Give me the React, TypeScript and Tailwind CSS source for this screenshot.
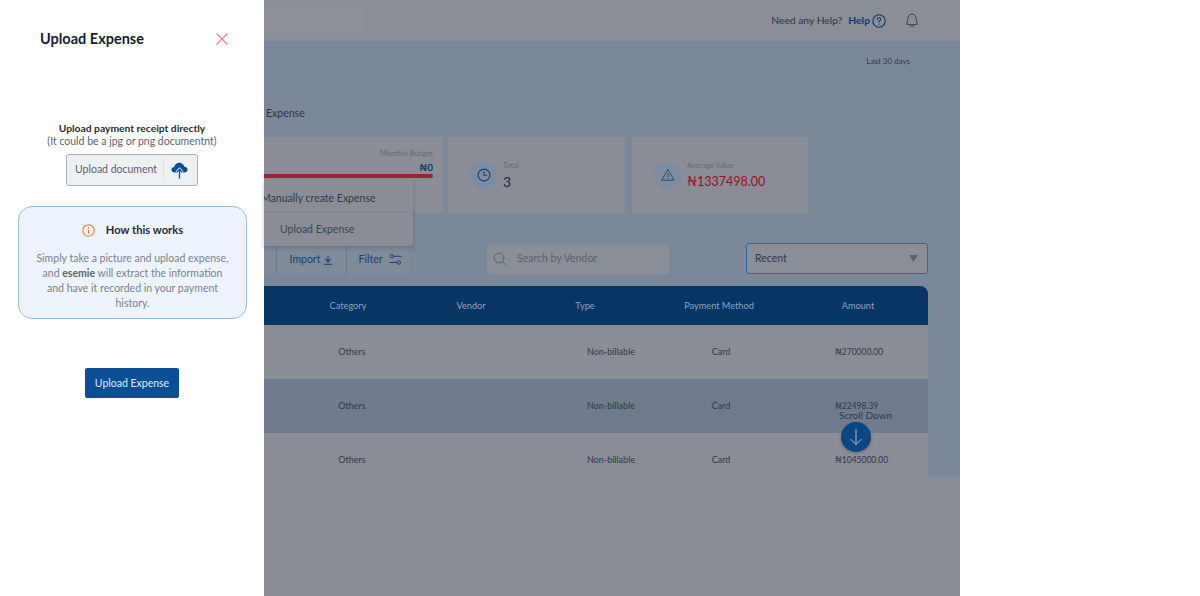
import React from "react";

function CloudUp() {
  return (
    <svg width="17" height="19" viewBox="0 0 18 19" fill="none">
      <path d="M4 11.5C1.8 11.5 0.5 10.2 0.5 8.6C0.5 7 1.8 5.8 3.4 5.8C3.9 3.2 6 1.2 8.8 1.2C11.5 1.2 13.7 3 14.2 5.6C16.2 5.6 17.5 7 17.5 8.6C17.5 10.2 16.2 11.5 14.2 11.5Z" fill="#0a4f96" />
      <path d="M9 18V8.5M5.8 11.5L9 8.2L12.2 11.5" stroke="#edf1f4" strokeWidth="3" />
      <path d="M9 18V8.5M6 11.5L9 8.2L12 11.5" stroke="#0a4f96" strokeWidth="1.4" />
    </svg>
  );
}

function Rows() {
  const rows = [
    { bg: "bg-[#8a8d96]", a: "₦270000.00" },
    { bg: "bg-[#707b8d]", a: "₦22498.39" },
    { bg: "bg-[#8a8d96]", a: "₦1045000.00" },
  ];
  return (
    <>
      {rows.map((r) => (
        <div key={r.a} className={`flex h-[54px] items-center text-[9px] text-[#343a47] ${r.bg}`}>
          <div className="w-[55px]" />
          <div className="w-[66px] text-center">Others</div>
          <div className="w-[186px]" />
          <div className="w-[80px] whitespace-nowrap text-center">Non-billable</div>
          <div className="w-[140px] text-center">Card</div>
          <div className="ml-[44px] whitespace-nowrap text-[8.5px]">{r.a}</div>
        </div>
      ))}
    </>
  );
}

export default function App() {
  return (
    <div className="relative flex h-[596px] w-[1200px] overflow-hidden bg-white font-['Lato','Liberation_Sans',sans-serif]">
      <aside className="flex h-full w-[264px] shrink-0 flex-col bg-white">
        <div className="flex h-[77px] items-center justify-between pl-10 pr-[35px]">
          <h1 className="text-[14.5px] font-bold text-[#161d2e]">Upload Expense</h1>
          <svg width="14" height="14" viewBox="0 0 14 14" fill="none" stroke="#ef7d85" strokeWidth="1.1">
            <path d="M1.5 1.5L12.5 12.5M12.5 1.5L1.5 12.5" />
          </svg>
        </div>
        <div className="mt-[45px] flex flex-col items-center text-center">
          <p className="text-[10.3px] font-bold leading-[13px] text-[#272b36]">Upload payment receipt directly</p>
          <p className="text-[10.5px] leading-[13px] text-[#5d6370]">(It could be a jpg or png documentnt)</p>
          <div className="mt-[6px] flex h-8 w-[132px] items-center rounded-[3px] border border-[#a9afb8] bg-[#edf1f4] pl-2">
            <span className="whitespace-nowrap text-[10.5px] text-[#5b616e]">Upload document</span>
            <div className="ml-[6px] mr-[7px] h-[24px] w-px bg-[#dfe3e8]" />
            <CloudUp />
          </div>
        </div>
        <section className="mx-[18px] mt-5 flex h-[113px] w-[229px] flex-col items-center rounded-[14px] border border-[#9bbcdc] bg-[#edf4fd] pt-[15px] text-center">
          <div className="flex items-center">
            <svg width="13" height="13" viewBox="0 0 13 13" fill="none" stroke="#e8792f" strokeWidth="1.1" strokeLinecap="round">
              <circle cx="6.5" cy="6.5" r="5.7" />
              <path d="M6.5 6.2V9.2M6.5 3.9V4.1" />
            </svg>
            <span className="ml-[11px] text-[11.2px] font-bold text-[#272b36]">How this works</span>
          </div>
          <p className="mt-[12px] w-[194px] text-[10.5px] leading-[15px] text-[#7c8290]">
            Simply take a picture and upload expense, and <b className="font-bold text-[#5f6572]">esemie</b> will extract the information and have it recorded in your payment history.
          </p>
        </section>
        <button className="ml-[85px] mt-[49px] h-[30px] w-[94px] rounded-[2px] bg-[#0a4f96] pt-[1px] text-[10.5px] text-[#dfeaf6]">Upload Expense</button>
      </aside>

      <main className="relative flex h-full w-[696px] shrink-0 flex-col bg-[#8a8d96]">
        <div className="flex h-[477px] flex-col overflow-hidden bg-[#7b8899]">
          <header className="flex h-[41px] shrink-0 items-center bg-[#8a8e96] pr-[41px]">
            <div className="h-[23px] w-[99px] rounded-r-[3px] bg-[#8e9199]" />
            <span className="ml-auto text-[10.3px] text-[#2f3542]">Need any Help?</span>
            <span className="ml-[6px] text-[10.3px] font-bold text-[#0d3a6e]">Help</span>
            <svg className="ml-[2px]" width="14" height="14" viewBox="0 0 14 14" fill="none" stroke="#0d3a6e" strokeWidth="1.1" strokeLinecap="round">
              <circle cx="7" cy="7" r="6.2" />
              <path d="M5.2 5.4C5.2 4.3 6 3.7 7 3.7C8 3.7 8.8 4.4 8.8 5.3C8.8 6.5 7 6.6 7 8M7 10V10.2" />
            </svg>
            <svg className="ml-[19px]" width="14" height="15" viewBox="0 0 14 15" fill="none" stroke="#343a47" strokeWidth="0.9" strokeLinejoin="round">
              <path d="M1.3 11C2.4 9.8 2.7 8.6 2.7 6.2C2.7 3.4 4.6 1 7 1C9.4 1 11.3 3.4 11.3 6.2C11.3 8.6 11.6 9.8 12.7 11C9 11.9 5 11.9 1.3 11Z" />
              <path d="M5.2 12C5.4 13.2 6 13.9 7 13.9C8 13.9 8.6 13.2 8.8 12" />
            </svg>
          </header>

          <div className="mt-[15px] pr-[50px] text-right text-[8px] leading-[11px] text-[#343a47]">Last 30 days</div>

          <div className="mt-[39px] pl-[2px] text-[10.5px] leading-[14px] text-[#2f3542]">Expense</div>

          <div className="mt-[17px] flex h-[76px] shrink-0">
            <div className="relative w-[179px] rounded-r-[3px] bg-[#8a8d96]">
              <div className="absolute right-[10px] top-[11px] text-[7.5px] text-[#666b75]">Monthly Budget</div>
              <div className="absolute right-[10px] top-[23px] text-[10px] font-bold text-[#0d3a6e]">₦0</div>
              <div className="absolute right-[10px] top-[37px] h-[4px] w-[169px] rounded-r-full bg-[#9c2336]" />
            </div>
            <div className="ml-[5px] flex w-[177px] items-center rounded-[2px] bg-[#8a8d96] pl-[22px]">
              <div className="flex h-[27px] w-[27px] items-center justify-center rounded-full bg-[#7b8ca3]">
                <svg width="14" height="14" viewBox="0 0 14 14" fill="none" stroke="#1c3d66" strokeWidth="1.1" strokeLinecap="round">
                  <circle cx="7" cy="7" r="5.9" />
                  <path d="M7 4V7.3H9.6" />
                </svg>
              </div>
              <div className="ml-[6px] pt-[2px]">
                <div className="text-[7.5px] leading-[10px] text-[#666b75]">Total</div>
                <div className="mt-[2px] text-[14px] leading-[18px] text-[#23293a]">3</div>
              </div>
            </div>
            <div className="ml-[7px] flex w-[176px] items-center rounded-[2px] bg-[#8a8d96] pl-[22px]">
              <div className="flex h-[27px] w-[27px] items-center justify-center rounded-full bg-[#7b8ca3]">
                <svg width="14" height="14" viewBox="0 0 14 14" fill="none" stroke="#33415a" strokeWidth="0.9" strokeLinecap="round" strokeLinejoin="round">
                  <path d="M7 1.7L13 12.2H1Z" />
                  <path d="M7 5.5V8.6M7 10.3V10.4" />
                </svg>
              </div>
              <div className="ml-[6px] pt-[2px]">
                <div className="text-[7.5px] leading-[10px] text-[#666b75]">Average Value</div>
                <div className="mt-[2px] text-[12.5px] leading-[18px] text-[#9d1029]">₦1337498.00</div>
              </div>
            </div>
          </div>

          <div className="mt-[30px] flex h-[31px] shrink-0 items-center">
            <div className="mt-[2px] flex h-[29px] w-[146px] items-center bg-[#808b9a] text-[10.5px] text-[#1b4070]">
              <div className="h-full w-[13px] border-r border-[#6e7a8c]" />
              <div className="flex h-full w-[70px] items-center justify-center gap-[3px] border-r border-[#6e7a8c]">
                Import
                <svg width="10" height="10" viewBox="0 0 10 10" fill="none" stroke="#1b4070" strokeWidth="1.1">
                  <path d="M5 0.5V6.8M2.2 4.2L5 7L7.8 4.2M0.8 9.2H9.2" />
                </svg>
              </div>
              <div className="flex h-full flex-1 items-center justify-center gap-[6px] pl-[3px]">
                Filter
                <svg width="13" height="11" viewBox="0 0 13 11" fill="none" stroke="#1b4070" strokeWidth="1">
                  <circle cx="2.8" cy="2.3" r="1.7" />
                  <path d="M4.5 2.3H12.5M0.5 8.5H8" />
                  <circle cx="9.8" cy="8.5" r="1.7" />
                </svg>
              </div>
            </div>
            <div className="ml-[77px] mt-[1px] flex h-[29px] w-[182px] items-center rounded-[3px] bg-[#8a8e97] pl-[6px] text-[10.5px] text-[#5a6371]">
              <svg width="14" height="14" viewBox="0 0 14 14" fill="none" stroke="#5a6371" strokeWidth="1">
                <circle cx="6" cy="6" r="4.9" />
                <path d="M9.6 9.6L13 13" />
              </svg>
              <span className="ml-[10px]">Search by Vendor</span>
            </div>
            <div className="ml-[77px] flex h-[31px] w-[182px] items-center justify-between rounded-[3px] border border-[#2f6aa5] bg-[#8a8e97] pl-2 pr-[9px] text-[10.5px] text-[#343a47]">
              Recent
              <svg width="9" height="7" viewBox="0 0 9 7"><path d="M0 0H9L4.5 7Z" fill="#5d626c" /></svg>
            </div>
          </div>

          <div className="mt-[12px] w-[664px] shrink-0">
            <div className="flex h-[39px] items-center rounded-tr-[8px] bg-[#073564] text-[9.2px] text-[#8ea3bf]">
              <div className="w-[47px]" />
              <div className="w-[74px] text-center">Category</div>
              <div className="w-[172px] text-center">Vendor</div>
              <div className="w-[56px] text-center">Type</div>
              <div className="w-[212px] text-center">Payment Method</div>
              <div className="w-[66px] text-center">Amount</div>
            </div>
            <Rows />
          </div>
        </div>

        {/* Dropdown menu over the cards */}
        <div className="absolute left-0 top-[179px] z-10 h-[67px] w-[149px] rounded-br-[4px] bg-[#8a8d96] shadow-[0_2px_4px_rgba(40,50,70,0.25)]">
          <div className="h-[34px] overflow-hidden border-b border-[#84878f]">
            <div className="ml-[-3px] whitespace-nowrap pt-[12px] text-[10.5px] leading-[14px] text-[#343a47]">Manually create Expense</div>
          </div>
          <div className="pl-[16px] pt-[9px] text-[10.5px] leading-[14px] text-[#3f4552]">Upload Expense</div>
        </div>

        {/* Floating scroll hint */}
        <div className="absolute left-[575px] top-[409px] z-10 flex flex-col items-start">
          <span className="whitespace-nowrap text-[10px] leading-[12px] text-[#2a3c58]">Scroll Down</span>
          <div className="ml-[2px] mt-[1px] flex h-[30px] w-[30px] items-center justify-center rounded-full bg-[#0c4782] shadow-[0_1px_3px_rgba(30,40,60,0.4)]">
            <svg width="14" height="18" viewBox="0 0 14 18" fill="none" stroke="#a9bcd3" strokeWidth="1">
              <path d="M7 1V16.5M1.5 11L7 16.5L12.5 11" />
            </svg>
          </div>
        </div>
      </main>
    </div>
  );
}
